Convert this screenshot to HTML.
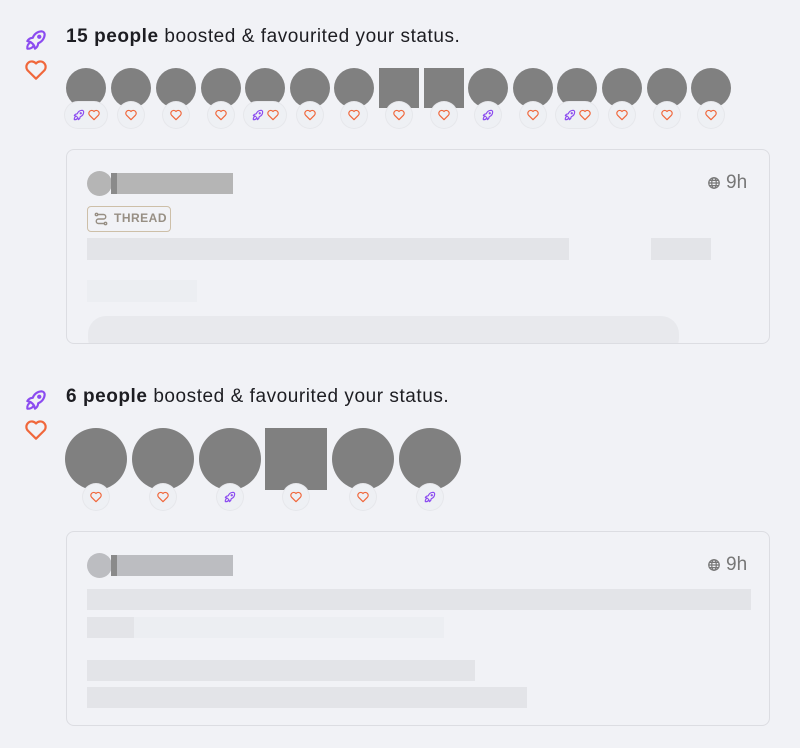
<!DOCTYPE html>
<html><head><meta charset="utf-8"><style>
body{margin:0;width:800px;height:748px;background:#f1f2f6;font-family:"Liberation Sans",sans-serif;position:relative;overflow:hidden}
.a{position:absolute}
.av{position:absolute;background:#808080;border-radius:50%}
.bd{position:absolute;height:26px;border-radius:13px;background:#eef0f4;box-shadow:0 0 0 1px #e6e7eb;display:flex;align-items:center;justify-content:center;gap:1px}
.t{position:absolute;left:66px;font-size:19px;letter-spacing:0.55px;color:#1d1d22}
.card{position:absolute;left:66px;width:704px;height:195px;border:1px solid #dcdde2;border-radius:8px;box-sizing:border-box;background:#f1f2f6;overflow:hidden}
.bar{position:absolute;background:#e3e4e8}
.tm{position:absolute;left:640px;top:22px;font-size:19px;color:#777;display:flex;align-items:center;gap:5px}
</style></head><body>
<svg width="0" height="0" style="position:absolute"><defs>
<symbol id="r" viewBox="0 0 24 24"><g fill="none" stroke="#8c4cf0" stroke-width="2" stroke-linecap="round" stroke-linejoin="round"><path d="M4 13a8 8 0 0 1 7 7a6 6 0 0 0 3-5a9 9 0 0 0 6-8a3 3 0 0 0-3-3a9 9 0 0 0-8 6a6 6 0 0 0-5 3"/><path d="M7 14a6 6 0 0 0-3 6a6 6 0 0 0 6-3"/><circle cx="15" cy="9" r="1"/></g></symbol>
<symbol id="h" viewBox="0 0 24 24"><path d="M19.5 12.6L12 20l-7.5-7.4A5 5 0 1 1 12 6a5 5 0 1 1 7.5 6.6z" fill="none" stroke="#f0673b" stroke-width="2" stroke-linejoin="round"/></symbol>
<symbol id="g" viewBox="0 0 16 16"><g fill="none" stroke="#777" stroke-width="1.4"><circle cx="8" cy="8" r="6"/><ellipse cx="8" cy="8" rx="2.6" ry="6"/><path d="M2 8h12M3 5h10M3 11h10"/></g></symbol>
</defs></svg>

<svg class="a" style="left:23px;top:27px" width="26" height="26"><use href="#r"/></svg>
<svg class="a" style="left:23px;top:57px" width="26" height="26"><use href="#h"/></svg>
<div class="t" style="top:26px"><b>15 people</b> boosted &amp; favourited your status.</div>

<svg class="a" style="left:23px;top:387px" width="26" height="26"><use href="#r"/></svg>
<svg class="a" style="left:23px;top:417px" width="26" height="26"><use href="#h"/></svg>
<div class="t" style="top:386px"><b>6 people</b> boosted &amp; favourited your status.</div>

<div id="row1"></div>
<div id="row2"></div>

<div class="card" style="top:149px">
 <div class="a" style="left:20px;top:21px;width:25px;height:25px;border-radius:50%;background:#b5b5b5"></div>
 <div class="a" style="left:44px;top:23px;width:6px;height:21px;background:#8a8a8a"></div>
 <div class="a" style="left:50px;top:23px;width:116px;height:21px;background:#b5b5b5"></div>
 <div class="a" style="left:20px;top:56px;width:84px;height:26px;border:1.5px solid #cdbfa8;border-radius:4px;box-sizing:border-box;font-size:12px;font-weight:bold;color:#978f84;letter-spacing:.5px;line-height:23px;padding-left:26px">
  <svg class="a" style="left:6px;top:5px" width="14" height="14" viewBox="0 0 14 14"><g fill="none" stroke="#978f84" stroke-width="1.4" stroke-linecap="round"><circle cx="2.5" cy="2.5" r="1.2"/><circle cx="11.5" cy="11.5" r="1.2"/><path d="M4 2.5h5.5a2.2 2.2 0 0 1 0 4.5h-5a2.2 2.2 0 0 0 0 4.5H10"/></g></svg>THREAD</div>
 <div class="tm"><svg width="14" height="14"><use href="#g"/></svg>9h</div>
 <div class="bar" style="left:20px;top:88px;width:482px;height:22px"></div>
 <div class="bar" style="left:584px;top:88px;width:60px;height:22px"></div>
 <div class="bar" style="left:20px;top:130px;width:110px;height:22px;background:#eceef2"></div>
 <div class="a" style="left:21px;top:166px;width:591px;height:40px;border-radius:18px;background:#e8e9ed"></div>
</div>

<div class="card" style="top:531px">
 <div class="a" style="left:20px;top:21px;width:25px;height:25px;border-radius:50%;background:#bcbdc1"></div>
 <div class="a" style="left:44px;top:23px;width:6px;height:21px;background:#8a8a8a"></div>
 <div class="a" style="left:50px;top:23px;width:116px;height:21px;background:#bcbdc1"></div>
 <div class="tm"><svg width="14" height="14"><use href="#g"/></svg>9h</div>
 <div class="bar" style="left:20px;top:57px;width:664px;height:21px"></div>
 <div class="bar" style="left:20px;top:85px;width:47px;height:21px"></div>
 <div class="bar" style="left:67px;top:85px;width:310px;height:21px;background:#eceef2"></div>
 <div class="bar" style="left:20px;top:128px;width:388px;height:21px"></div>
 <div class="bar" style="left:20px;top:155px;width:440px;height:21px"></div>
</div>

<script>
var r1=document.getElementById('row1');
var xs=[66,111,156,201,245,290,334,379,424,468,513,557,602,647,691];
var kinds=['rh','h','h','h','rh','h','h','h','h','r','h','rh','h','h','h'];
var sq=[7,8];
var H='';
xs.forEach(function(x,i){
 var s=sq.indexOf(i)>=0;
 H+='<div class="av" style="left:'+x+'px;top:68px;width:40px;height:40px;'+(s?'border-radius:0;':'')+'"></div>';
 var k=kinds[i],w=k.length==2?42:26;
 H+='<div class="bd" style="left:'+(x+20-w/2)+'px;top:102px;width:'+w+'px">';
 for(var c of k)H+='<svg width="14" height="14"><use href="#'+c+'"/></svg>';
 H+='</div>';
});
r1.innerHTML=H;
var xs2=[65,132,199,265,332,399],k2=['h','h','r','h','h','r'];H='';
xs2.forEach(function(x,i){
 H+='<div class="av" style="left:'+x+'px;top:428px;width:62px;height:62px;'+(i==3?'border-radius:0;':'')+'"></div>';
 H+='<div class="bd" style="left:'+(x+18)+'px;top:484px;width:26px;height:26px;border-radius:13px"><svg width="14" height="14"><use href="#'+k2[i]+'"/></svg></div>';
});
document.getElementById('row2').innerHTML=H;
</script>
</body></html>
